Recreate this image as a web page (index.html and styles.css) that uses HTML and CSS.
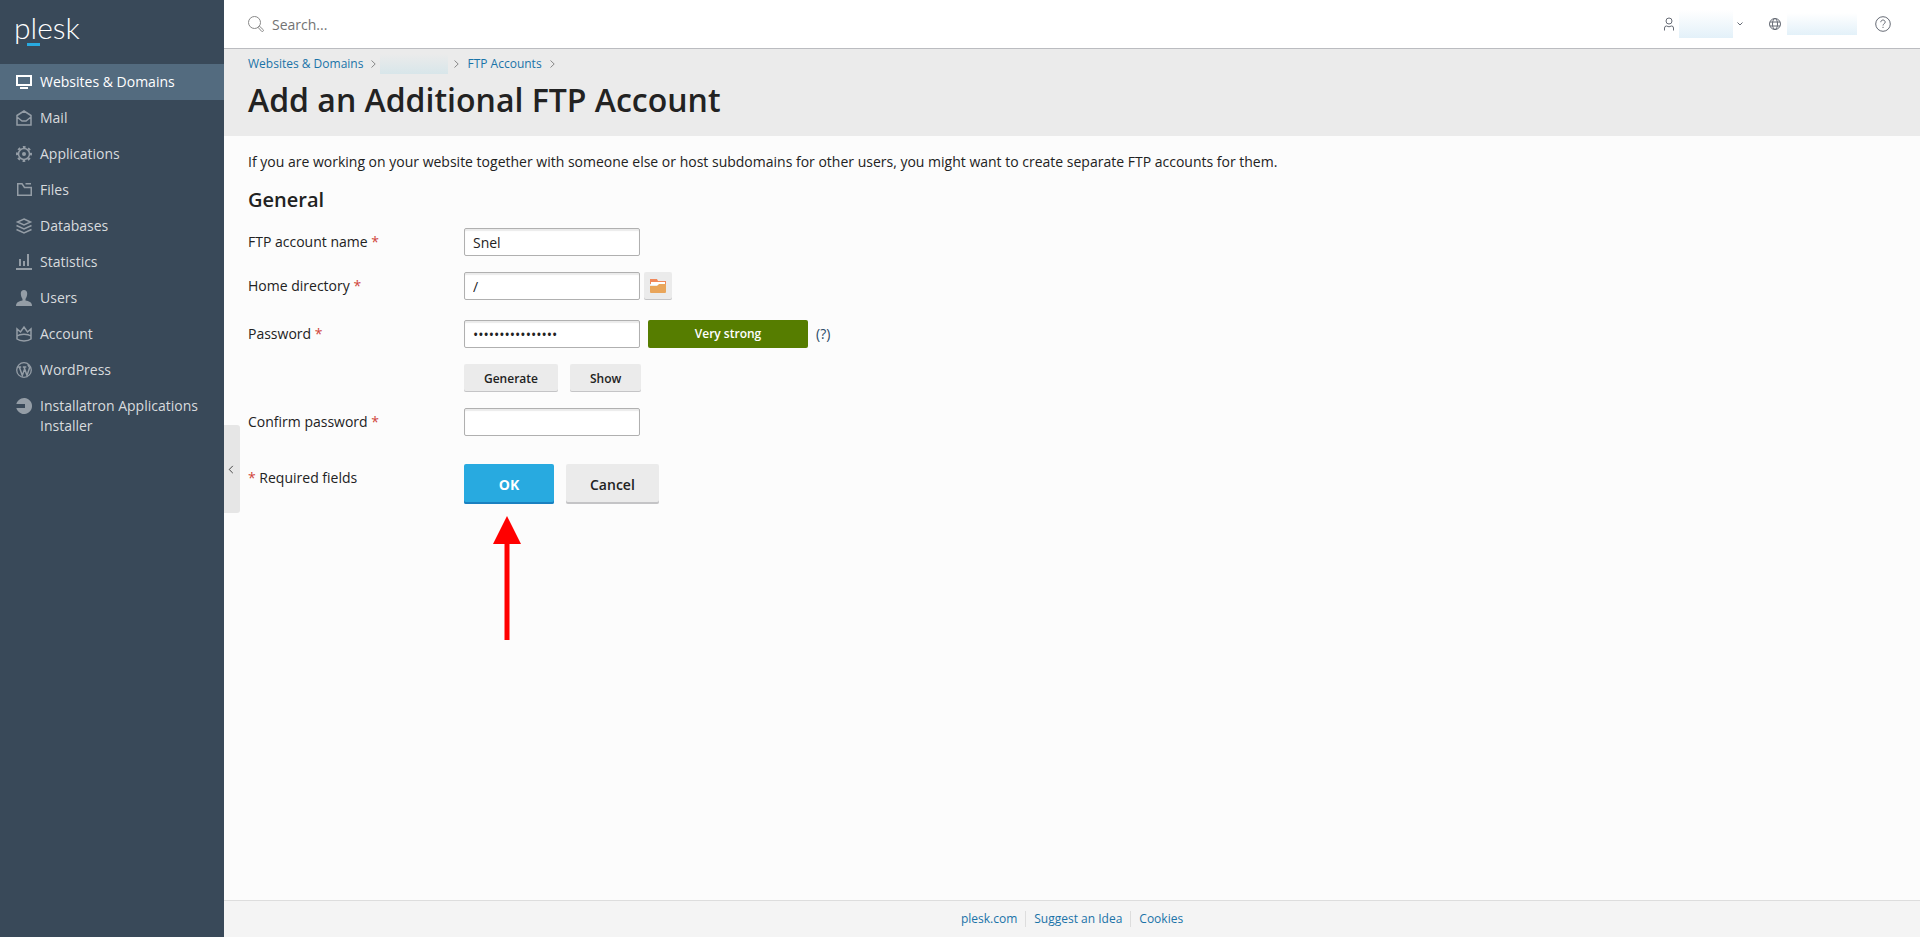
FILE: index.html
```html
<!DOCTYPE html>
<html lang="en">
<head>
    <title>Add an Additional FTP Account</title>
    <meta charset="UTF-8">
    <meta name="viewport" content="width=device-width, initial-scale=1.0">
    <link rel="stylesheet" href="styles.css">
</head>
<body>
<aside class="sidebar">
    <a class="logo" href="#">plesk</a>
    <nav class="menu">
        <a class="menu-item active" href="#">
            <svg class="icon" viewBox="0 0 16 16"><path d="M0 0h16v11H0zM2 2v7h12V2zM4 12h8v2H4z" fill-rule="evenodd"/></svg>
            <span>Websites &amp; Domains</span>
        </a>
        <a class="menu-item" href="#">
            <svg class="icon line" viewBox="0 0 16 16"><path d="M1 5.500 8 1l7 4.500V15H1zM1 7l5 4h4l5-4"/></svg>
            <span>Mail</span>
        </a>
        <a class="menu-item" href="#">
            <svg class="icon line" viewBox="0 0 16 16"><circle cx="8" cy="8" r="5.500"/><circle cx="8" cy="8" r="7" stroke-width="2" stroke-dasharray="2.750 2.748" stroke-dashoffset="1.370"/><circle class="dot" cx="8" cy="8" r="2"/></svg>
            <span>Applications</span>
        </a>
        <a class="menu-item" href="#">
            <svg class="icon line" viewBox="0 0 16 16"><path d="M1.750 2v11.250h13.500V5.500H8.500L6 1.750H1M9.500 1.750H15"/></svg>
            <span>Files</span>
        </a>
        <a class="menu-item" href="#">
            <svg class="icon line" viewBox="0 0 16 16"><path d="M8 1l6.500 3L8 7 1.500 4zM.5 7.500 8 11l7.500-3.500M.5 11.500 8 15l7.500-3.500"/></svg>
            <span>Databases</span>
        </a>
        <a class="menu-item" href="#">
            <svg class="icon" viewBox="0 0 16 16"><path d="M0 14h16v2H0zM3 5h2v7H3zM7 7h2v5H7zM11 0h2v12h-2z"/></svg>
            <span>Statistics</span>
        </a>
        <a class="menu-item" href="#">
            <svg class="icon" viewBox="0 0 16 16"><path d="M8 0c2 0 3.200 1.400 3.200 3.500S10.500 7.500 9.500 9v1.500c3 .7 6.500 1.200 6.500 5.500H0c0-4.300 3.500-4.800 6.500-5.500V9C5.500 7.500 4.800 5.600 4.800 3.500S6 0 8 0z"/></svg>
            <span>Users</span>
        </a>
        <a class="menu-item" href="#">
            <svg class="icon line" viewBox="0 0 16 16"><path d="M1 13V3l3.500 3L8 1l3.500 5L15 3v10c-3 2.600-11 2.600-14 0zM1 10c3-2.400 11-2.400 14 0"/></svg>
            <span>Account</span>
        </a>
        <a class="menu-item" href="#">
            <svg class="icon line" viewBox="0 0 16 16"><circle cx="8" cy="8" r="7.300" stroke-width="1.300"/><path d="M1.800 5h3.400M6.800 5h3.500M3.300 5l3 8.500L8.600 7M8 5l3 8.500L13.500 6c.3-1.500-1.500-2-1.500-3.500"/></svg>
            <span>WordPress</span>
        </a>
        <a class="menu-item" href="#">
            <svg class="icon" viewBox="0 0 16 16"><path d="M.3 6A8 8 0 1 1 .3 10H9V6z"/></svg>
            <span>Installatron Applications Installer</span>
        </a>
    </nav>
    <button class="collapse" type="button" aria-label="Collapse menu">
        <svg viewBox="0 0 6 10"><path d="M5 1 1 5l4 4"/></svg>
    </button>
</aside>
<div class="page">
    <header class="topbar">
        <label class="search">
            <svg viewBox="0 0 16 16"><circle cx="6.500" cy="6.500" r="6"/><path d="M10 11.300 11.300 10l4 3.800q.4.800-.2 1.400t-1.400.2z"/></svg>
            <input type="text" placeholder="Search..." aria-label="Search">
        </label>
        <div class="tools">
            <button class="tool user" type="button" aria-label="User menu">
                <svg width="12" height="14" viewBox="0 0 12 14"><circle cx="6" cy="4" r="3"/><path d="M1.500 13.500V11q0-2 2-2L6 9.800 8.500 9q2 0 2 2v2.500"/></svg>
                <span class="hidden-name"></span>
                <svg width="6" height="4" viewBox="0 0 6 4"><path d="M.5.500 3 3 5.500.5"/></svg>
            </button>
            <button class="tool subscription" type="button" aria-label="Subscription">
                <svg width="12" height="12" viewBox="0 0 12 12"><circle cx="6" cy="6" r="5.500"/><ellipse cx="6" cy="6" rx="2.500" ry="5.500"/><path d="M1 4h10M1 8h10"/></svg>
                <span class="hidden-name wide"></span>
            </button>
            <button class="tool" type="button" aria-label="Help">
                <svg width="16" height="16" viewBox="0 0 16 16"><circle cx="8" cy="8" r="7.300"/><path d="M5.800 6.200C5.800 3.300 10.200 3.300 10.200 6.200 10.200 7.700 8 7.800 8 9.500M8 10.800v1.200"/></svg>
            </button>
        </div>
    </header>
    <div class="heading">
        <nav class="breadcrumbs">
            <a href="#">Websites &amp; Domains</a>
            <svg viewBox="0 0 5 8"><path d="M.5.500 4.200 4 .5 7.500"/></svg>
            <span class="crumb-hidden"></span>
            <svg viewBox="0 0 5 8"><path d="M.5.500 4.200 4 .5 7.500"/></svg>
            <a href="#">FTP Accounts</a>
            <svg viewBox="0 0 5 8"><path d="M.5.500 4.200 4 .5 7.500"/></svg>
        </nav>
        <h1>Add an Additional FTP Account</h1>
    </div>
    <main class="content">
        <p class="intro">If you are working on your website together with someone else or host subdomains for other users, you might want to create separate FTP accounts for them.</p>
        <form>
            <h2>General</h2>
            <div class="row">
                <label for="name">FTP account name <i>*</i></label>
                <input class="field" id="name" type="text" value="Snel">
            </div>
            <div class="row directory">
                <label for="directory">Home directory <i>*</i></label>
                <input class="field" id="directory" type="text" value="/">
                <button class="btn browse" type="button" aria-label="Browse">
                    <svg viewBox="0 0 16 14"><path fill="#f0885a" d="M0 0h7l1 2h8v3H0z"/><path fill="#fff" d="M1 3h14v3H1z"/><path fill="#e9a55a" d="M0 7h7l2-2h7v8q0 1-1 1H1q-1 0-1-1z"/></svg>
                </button>
            </div>
            <div class="row">
                <label for="password">Password <i>*</i></label>
                <input class="field" id="password" type="password" value="snelftpaccount12">
                <span class="strength">Very strong</span>
                <a class="hint" href="#">(?)</a>
            </div>
            <div class="row no-label">
                <button class="btn" type="button">Generate</button>
                <button class="btn" type="button">Show</button>
            </div>
            <div class="row">
                <label for="confirm">Confirm password <i>*</i></label>
                <input class="field" id="confirm" type="password">
            </div>
            <div class="row actions">
                <span class="required"><i>*</i> Required fields</span>
                <div class="ok-wrap">
                    <button class="btn big ok" type="submit">OK</button>
                    <svg class="arrow" viewBox="0 0 28 124"><path d="M14 0l14 28H16.500v96h-5V28H0z"/></svg>
                </div>
                <button class="btn big" type="button">Cancel</button>
            </div>
        </form>
    </main>
    <footer class="footer">
        <a href="#">plesk.com</a>
        <a href="#">Suggest an Idea</a>
        <a href="#">Cookies</a>
    </footer>
</div>
</body>
</html>
```
FILE: styles.css
```css
* {
    box-sizing: border-box;
}

body {
    display: flex;
    min-height: 100vh;
    margin: 0;
    background: #fcfcfc;
    color: #222;
    font-family: "Open Sans", sans-serif;
    font-size: 14px;
    line-height: 20px;
}

a {
    color: #1a73a8;
    text-decoration: none;
}

button, input {
    font-family: inherit;
    font-size: inherit;
    color: inherit;
}

/* Sidebar */
.sidebar {
    position: relative;
    flex: 0 0 224px;
    background: #394959;
}

.logo {
    display: block;
    height: 64px;
    padding: 9px 14px;
    color: #fff;
    font-family: Lato, sans-serif;
    font-size: 30px;
    font-weight: 300;
    line-height: 36px;
}

.logo::after {
    content: "";
    position: absolute;
    top: 43px;
    left: 27px;
    width: 13px;
    height: 3px;
    background: #28aae1;
}

.menu-item {
    display: flex;
    gap: 8px;
    padding: 8px 16px;
    color: #d8dbde;
}

.menu-item.active {
    background: #536b7f;
    color: #fff;
}

.icon {
    flex: none;
    width: 16px;
    height: 16px;
    margin-top: 2px;
    fill: #949da6;
    overflow: visible;
}

.active .icon {
    margin-top: 3px;
    fill: #fff;
}

.icon.line {
    fill: none;
    stroke: #949da6;
    stroke-width: 1.5;
}

.icon .dot {
    fill: #949da6;
    stroke: none;
}

.collapse {
    position: absolute;
    top: 425px;
    left: 100%;
    width: 16px;
    height: 88px;
    padding: 0 0 0 4px;
    border: 0;
    border-radius: 0 3px 3px 0;
    background: #e6e6e6;
    text-align: left;
}

.collapse svg {
    display: block;
    width: 6px;
    height: 9px;
    fill: none;
    stroke: #333;
}

/* Top bar */
.page {
    display: flex;
    flex: 1;
    flex-direction: column;
}

.topbar {
    display: flex;
    justify-content: space-between;
    height: 49px;
    padding: 0 29px 0 24px;
    border-bottom: 1px solid #bbbcc0;
    background: #fff;
    box-shadow: 0 1px 1px #ddd;
}

.search {
    display: flex;
    align-items: center;
    gap: 8px;
}

.search svg {
    width: 16px;
    height: 16px;
    fill: none;
    stroke: #888;
}

.search input {
    padding: 0;
    border: 0;
    outline: 0;
}

.search input::placeholder {
    color: #737373;
}

.tools {
    display: flex;
    align-items: center;
}

.tool {
    display: flex;
    align-items: center;
    padding: 0;
    border: 0;
    background: none;
}

.tool svg {
    fill: none;
    stroke: #666b75;
}

.user {
    gap: 4px;
    margin-right: 26px;
}

.subscription {
    gap: 6px;
    margin-right: 18px;
}

.hidden-name {
    width: 54px;
    height: 28px;
    background: linear-gradient(#fff, #e3f1f9);
}

.hidden-name.wide {
    width: 70px;
    height: 22px;
}

/* Page heading */
.heading {
    height: 87px;
    padding: 5px 24px;
    background: #ebebeb;
}

.breadcrumbs {
    display: flex;
    align-items: center;
    gap: 8px;
    height: 20px;
    font-size: 12px;
}

.breadcrumbs svg {
    width: 5px;
    height: 8px;
    fill: none;
    stroke: #888;
}

.crumb-hidden {
    width: 68px;
    height: 20px;
    margin: 0 -2px 0 -4px;
    background: linear-gradient(#ebebeb, #d8e6ea);
}

h1 {
    margin: 6px 0 0;
    font-size: 32px;
    font-weight: 600;
    line-height: 40px;
}

/* Form */
.content {
    flex: 1;
    padding: 16px 24px;
}

.intro {
    margin: 0;
}

h2 {
    margin: 14px 0;
    font-size: 20px;
    font-weight: 600;
    line-height: 28px;
}

.row {
    display: flex;
    margin-bottom: 16px;
}

.row label, .required {
    flex: 0 0 216px;
    padding-top: 4px;
}

.row i {
    color: #d0453a;
    font-style: normal;
}

.directory {
    gap: 4px;
    margin-bottom: 20px;
}

.directory label {
    flex-basis: 212px;
}

.no-label {
    gap: 12px;
    padding-left: 216px;
}

.field {
    width: 176px;
    height: 28px;
    padding: 1px 8px 0;
    border: 1px solid #b0b0b0;
    border-radius: 2px;
    background: #fff;
    box-shadow: inset 0 2px 1px #ebebeb;
    outline: 0;
}

.btn {
    height: 28px;
    padding: 0 20px;
    border: 0;
    border-radius: 2px;
    background: #ebebeb;
    box-shadow: inset 0 -1px #c4c4c6;
    font-size: 12px;
    font-weight: 600;
}

.browse {
    width: 28px;
    padding: 0 6px;
}

.browse svg {
    display: block;
    width: 16px;
    height: 14px;
}

.strength {
    width: 160px;
    margin: 0 8px;
    border-radius: 2px;
    background: #567d00;
    color: #fff;
    font-size: 12px;
    font-weight: 600;
    line-height: 28px;
    text-align: center;
}

.hint {
    padding-top: 4px;
    color: #2b4a66;
}

.actions {
    margin-top: 28px;
}

.big {
    height: 40px;
    padding: 0 24px;
    box-shadow: inset 0 -2px #c4c4c6;
    font-size: 14px;
}

.ok-wrap {
    position: relative;
    margin-right: 12px;
}

.ok {
    width: 90px;
    background: #28aae0;
    box-shadow: inset 0 -2px #1a80c0;
    color: #fff;
    font-weight: 700;
}

/* Pointer below the OK button */
.arrow {
    position: absolute;
    top: 52px;
    left: 29px;
    width: 28px;
    height: 124px;
    fill: #f00;
}

/* Footer */
.footer {
    display: flex;
    justify-content: center;
    padding: 10px 0;
    border-top: 1px solid #ddd;
    background: #f4f4f4;
    font-size: 12px;
    line-height: 16px;
}

.footer a {
    padding: 0 8px;
}

.footer a + a {
    border-left: 1px solid #ddd;
}
```
